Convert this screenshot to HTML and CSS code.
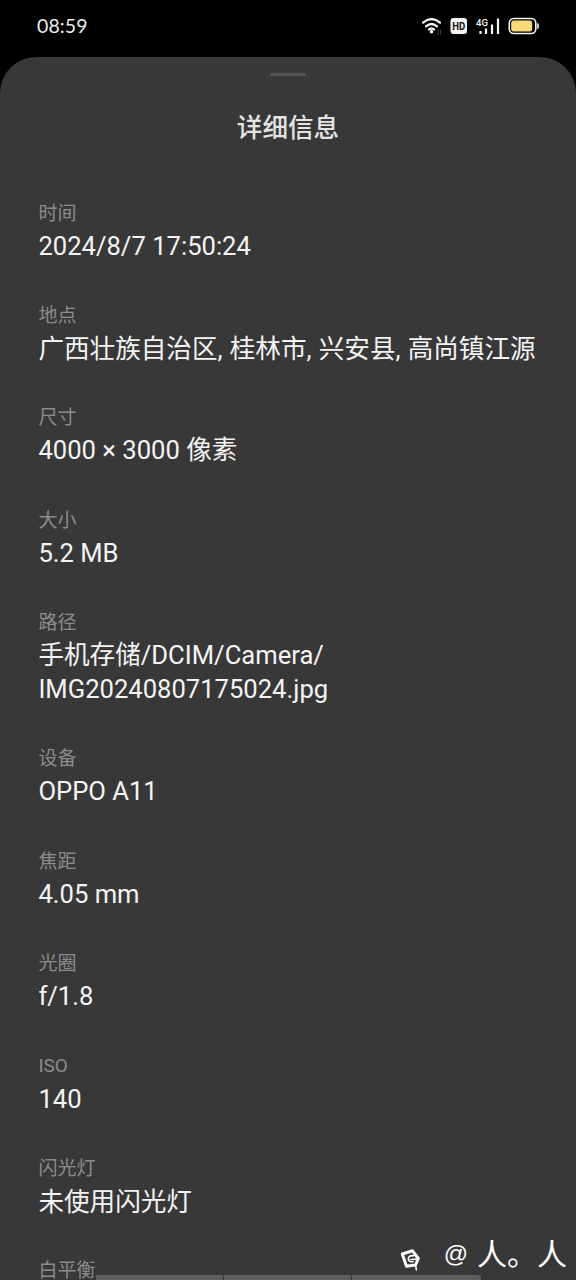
FILE: index.html
```html
<!DOCTYPE html>
<html lang="zh-CN">
<head>
<meta charset="utf-8">
<title>详细信息</title>
<link rel="stylesheet" href="styles.css">
</head>
<body>
<div class="screen">
  <header class="status">
    <span class="clock">08:59</span>
    <svg class="status-icons" width="124" height="24" viewBox="0 0 124 24">
      <g fill="none" stroke="#f4f4f4" stroke-width="2.200" stroke-linecap="round">
        <path d="M3 8.700Q11.500 1.500 20 8.700"/>
        <path d="M6 12.300Q11.500 7.700 17 12.300"/>
        <path d="M8.900 15.500Q11.500 13.500 14.100 15.500"/>
      </g>
      <circle cx="11.500" cy="17.800" r="1.800" fill="#f4f4f4"/>
      <path d="M18 16v5M20.500 16v5" stroke="#3a3a3a" stroke-width="1"/>
      <rect x="30.500" y="4" width="16.500" height="16" rx="3" fill="#f4f4f4"/>
      <text x="38.700" y="16.200" class="hd" textLength="13" lengthAdjust="spacingAndGlyphs">HD</text>
      <text x="56" y="11.500" class="net">4G</text>
      <path d="M60.500 17v3M66 14.500v5.500M72 10.500v9.500M78 4.500v15.500" stroke="#f4f4f4" stroke-width="2.200"/>
      <rect x="89.300" y="4.500" width="26.500" height="15" rx="4.500" fill="none" stroke="#f4f4f4" stroke-width="1.600"/>
      <rect x="91.200" y="6.400" width="21" height="11.200" rx="2.500" fill="#fbd97a"/>
      <path d="M118 10v4" stroke="#f4f4f4" stroke-width="1.600" stroke-linecap="round"/>
    </svg>
  </header>
  <main class="sheet">
    <div class="handle"></div>
    <h1 class="title">详细信息</h1>
    <dl class="details">
      <div class="item"><dt>时间</dt><dd>2024/8/7 17:50:24</dd></div>
      <div class="item"><dt>地点</dt><dd class="han place">广西壮族自治区, 桂林市, 兴安县, 高尚镇江源</dd></div>
      <div class="item"><dt>尺寸</dt><dd>4000 × 3000 像素</dd></div>
      <div class="item"><dt>大小</dt><dd>5.2 MB</dd></div>
      <div class="item"><dt>路径</dt><dd>手机存储/DCIM/Camera/<br>IMG20240807175024.jpg</dd></div>
      <div class="item"><dt>设备</dt><dd>OPPO A11</dd></div>
      <div class="item"><dt>焦距</dt><dd>4.05 mm</dd></div>
      <div class="item"><dt>光圈</dt><dd>f/1.8</dd></div>
      <div class="item"><dt class="latin">ISO</dt><dd>140</dd></div>
      <div class="item"><dt>闪光灯</dt><dd class="han">未使用闪光灯</dd></div>
      <div class="item"><dt>白平衡</dt></div>
    </dl>
  </main>
  <div class="strip"><i></i><i></i><i></i></div>
  <div class="watermark">
    <svg width="24" height="26" viewBox="0 0 24 26" fill="none" stroke="#fff" stroke-linecap="round">
      <path d="M16 19L7.500 20.300L3.300 8L13.500 4.800L19.300 12.500L16.500 19" stroke-width="3" stroke-linejoin="round"/>
      <path d="M14.500 9.800Q9.500 9 9.300 13Q10 16.500 14 15.500M12 13.500L19 13M16.500 18L17.300 24" stroke-width="1.600"/>
    </svg>
    <span class="at">@</span><span class="name">人。人</span>
  </div>
</div>
</body>
</html>
```
FILE: styles.css
```css
body {
  margin: 0;
  background: #000;
  font-family: Roboto, "Noto Sans CJK SC", sans-serif;
}
.screen {
  position: relative;
  width: 576px;
  height: 1280px;
  overflow: hidden;
}
.status {
  display: flex;
  justify-content: space-between;
  align-items: center;
  box-sizing: border-box;
  height: 57px;
  padding: 0 32.5px 7px 37px;
}
.clock {
  font-family: Lato, sans-serif;
  font-size: 19.5px;
  letter-spacing: 0.1px;
  color: #eee;
}
.status-icons {
  margin-top: 2px;
}
.hd {
  font: 700 11px Roboto, sans-serif;
  text-anchor: middle;
  fill: #111;
}
.net {
  font: 500 9.5px Roboto, sans-serif;
  fill: #f4f4f4;
}
.sheet {
  display: flex;
  flex-direction: column;
  height: 1223px;
  border-radius: 36px 36px 0 0;
  background: #383838;
}
.handle {
  flex: none;
  align-self: center;
  width: 36px;
  height: 3px;
  margin-top: 16px;
  border-radius: 2px;
  background: #555;
}
.title {
  margin: 34px 0 0;
  font-size: 25.6px;
  font-weight: 500;
  line-height: 36px;
  text-align: center;
  color: #e4e4e4;
}
.details {
  margin: 49.500px 0 0;
  padding: 0 38.400px;
}
.item {
  padding-bottom: 35.400px;
}
dt {
  padding-top: 1px;
  margin-bottom: -1px;
  font-size: 19px;
  line-height: 33px;
  color: #8c8c8c;
}
.latin {
  padding-top: 0;
  margin-bottom: 0;
}
dd {
  margin: 0;
  font-size: 25.6px;
  line-height: 34px;
  white-space: nowrap;
  color: #f4f4f4;
}
.han {
  padding-top: 1px;
  margin-bottom: -1px;
}
.place {
  word-spacing: 0.8px;
}
.strip {
  position: absolute;
  left: 96px;
  bottom: 0;
  display: flex;
  gap: 1px;
  width: 385px;
  height: 5px;
  border-radius: 0 4px 0 0;
  overflow: hidden;
}
.strip i {
  width: 127px;
  background: #5e5e5e;
}
.strip i:last-child {
  flex: 1;
}
.watermark {
  position: absolute;
  right: 9px;
  bottom: 5px;
  display: flex;
  align-items: center;
  height: 40px;
  color: #fff;
}
.watermark svg {
  margin: 7px 20.5px 0 0;
}
.at {
  margin: 0 9px 2px 0;
  font: 24px "Liberation Sans", sans-serif;
}
.name {
  font-size: 30px;
  line-height: 40px;
}
```
